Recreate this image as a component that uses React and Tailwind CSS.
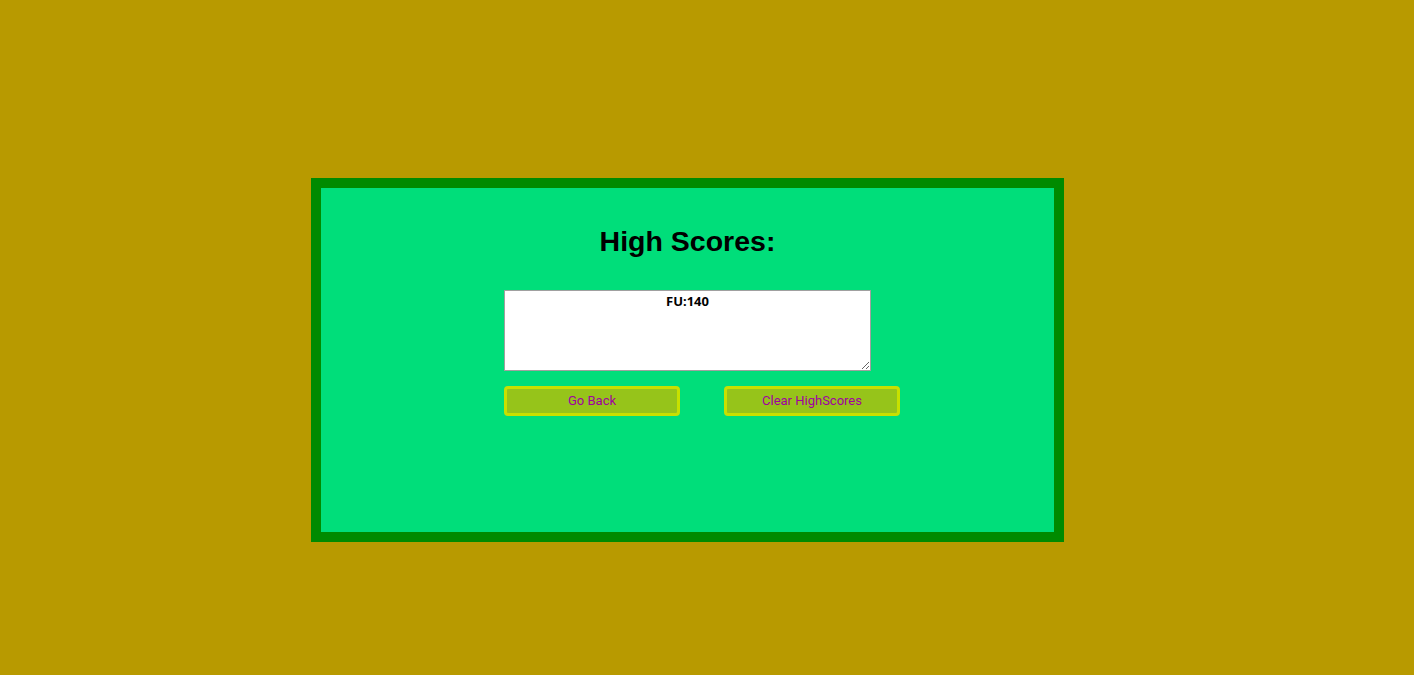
import React from 'react';

const App = () => {
    return (
        <div className="min-h-[675px] w-full bg-[#b89a00] pt-[178px] font-['Liberation_Sans',Arial,sans-serif]">
            <div className="mx-auto ml-[311px] w-[753px] h-[364px] border-[10px] border-[#008a00] bg-[#00de7a] flex flex-col items-center">
                <h1 className="mt-[36px] text-[28.5px] leading-[34px] font-bold text-black">High Scores:</h1>
                <div className="mt-[32px] w-[367px]">
                    <textarea
                        readOnly
                        value="FU:140"
                        className="block w-[367px] h-[81px] bg-white border border-[#a0a0a0] text-center text-[13px] leading-[18px] font-bold text-black pt-[1px] font-['Noto_Sans',sans-serif] resize outline-none"
                    />
                    <div className="mt-[15px] flex gap-[44px] w-[420px]">
                        <button className="w-[176px] h-[30px] shrink-0 rounded-[4px] border-[3px] border-[#c8e000] bg-[#96c41a] text-[#a000a0] text-[13px] font-['Roboto',sans-serif]">
                            Go Back
                        </button>
                        <button className="w-[176px] h-[30px] shrink-0 rounded-[4px] border-[3px] border-[#c8e000] bg-[#96c41a] text-[#a000a0] text-[13px] font-['Roboto',sans-serif]">
                            Clear HighScores
                        </button>
                    </div>
                </div>
            </div>
        </div>
    );
};

export default App;
